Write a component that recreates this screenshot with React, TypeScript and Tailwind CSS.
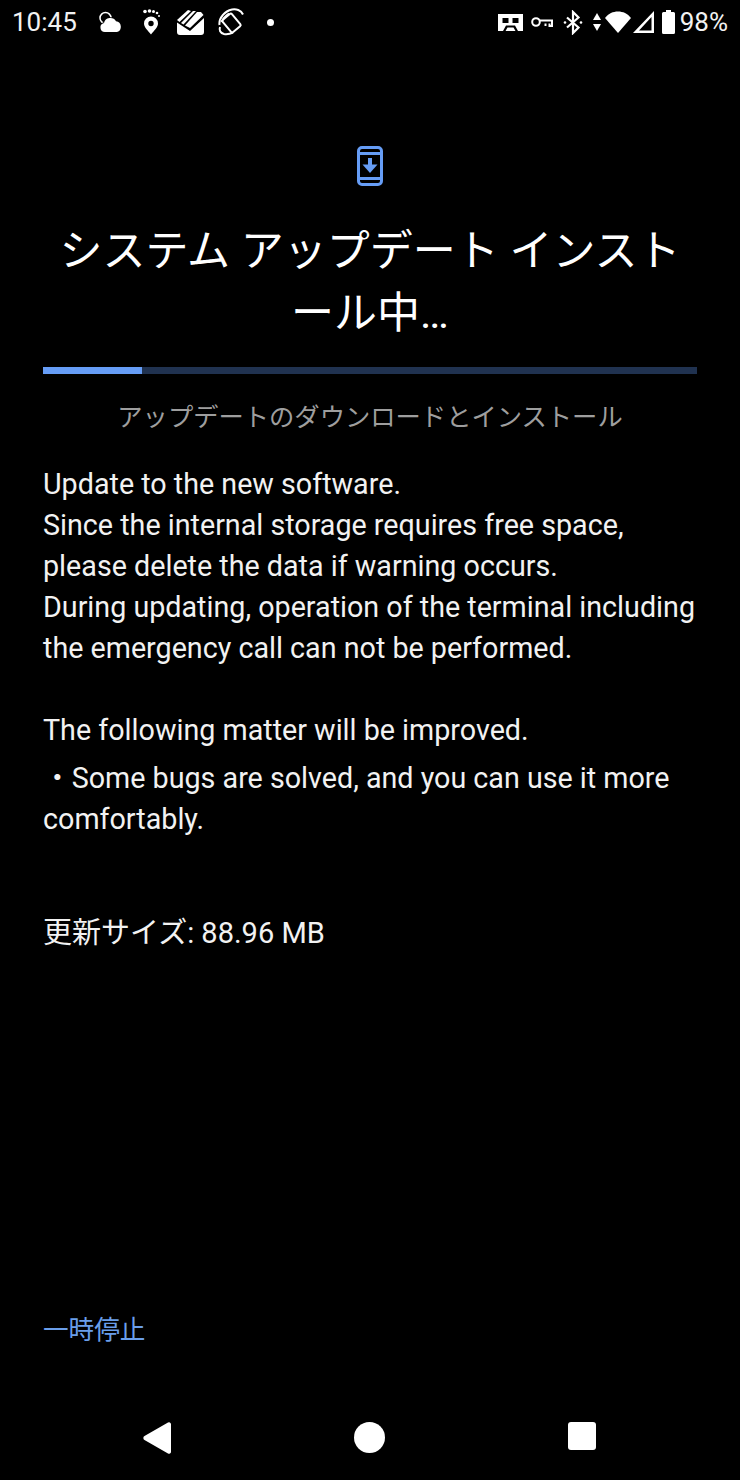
const FONT = "font-['Roboto','Noto_Sans_CJK_JP',sans-serif]"

function StatusBar() {
  return (
    <div className="h-[44px] flex items-center justify-between pl-[12px] pr-[12px] text-white">
      <div className="flex items-center">
        <span className="text-[26px] leading-none w-[87px] text-[#f2f2f2]">10:45</span>
        {/* weather */}
        <svg width="24" height="22" viewBox="0 0 24 22" className="mr-[19px]" fill="white">
          <circle cx="6.500" cy="7" r="5.500" fill="none" stroke="white" strokeWidth="1.500" />
          <path d="M6 21a4.500 4.500 0 0 1-1-8.900A6.500 6.500 0 0 1 17 10.300a5.500 5.500 0 0 1 1 10.700z" stroke="black" strokeWidth="1.500" paintOrder="stroke" />
        </svg>
        {/* steps */}
        <svg width="20" height="26" viewBox="0 0 20 26" className="mr-[15px]" fill="white">
          <circle cx="3" cy="2.500" r="1.800" />
          <circle cx="7.500" cy="2" r="1.800" />
          <circle cx="11.500" cy="2.500" r="1.500" />
          <circle cx="15" cy="4" r="1.300" />
          <circle cx="17" cy="7" r="1" />
          <path fillRule="evenodd" d="M9 7.500a7 7 0 0 1 7 7c0 4-4 7-7 11c-3-4-7-7-7-11a7 7 0 0 1 7-7zm0 4.300a2.700 2.700 0 1 0 0 5.400a2.700 2.700 0 0 0 0-5.400z" />
        </svg>
        {/* stacked mail */}
        <svg width="27" height="26" viewBox="0 0 27 26" className="mr-[13px]" fill="white">
          <path d="M0 11 L11 1 L14 2 L2.500 13z" />
          <path d="M4 14 L16 2 L19 2 L6.500 15.500z" />
          <path d="M8 16.500 L20 3 L24 3 L26.500 6 L13 19z" />
          <path d="M0 13.500 L13 22 L27 9 V23a3 3 0 0 1-3 3H3a3 3 0 0 1-3-3z" />
        </svg>
        {/* sync rotate */}
        <svg width="28" height="28" viewBox="0 0 28 28" className="mr-[22px]" fill="none" stroke="white" strokeWidth="2">
          <rect x="8.500" y="7" width="12" height="16" rx="1.500" transform="rotate(-40 14.500 15)" />
          <path d="M2.500 17C1.500 10 8 3 15 1.500c4-.8 9 .5 11 5" />
          <path d="M4.500 14C6 10.500 9 7.500 12 5.500" />
          <path d="M3 19c-1 3 0 6 4 7c3 .5 6 0 9-1.500" />
        </svg>
        <div className="w-[7px] h-[7px] rounded-full bg-white" />
      </div>
      <div className="flex items-center">
        {/* voicemail card */}
        <svg width="25" height="17" viewBox="0 0 25 17" className="mr-[8px]" fill="white">
          <path fillRule="evenodd" d="M0 0h25v17H0zM4.500 4v5h6V4zm10 0v5h6V4zM5 17L8 11.500H17L20 17H17.500L15.500 13.500H9.500L7.500 17z" />
        </svg>
        {/* vpn key */}
        <svg width="22" height="11" viewBox="0 0 22 11" className="mr-[10px]" fill="none" stroke="white" strokeWidth="2">
          <circle cx="5" cy="5" r="3.800" />
          <path d="M9 3.500H21V9H18.500V6.500M14.500 6.500V9" />
        </svg>
        {/* bluetooth */}
        <svg width="20" height="25" viewBox="0 0 20 25" className="mr-[10px]" fill="none" stroke="white" strokeWidth="2.200">
          <path d="M4 7.500L15.500 17.500L10 23V2L15.500 7.500L4 17.500" />
          <circle cx="2" cy="12.500" r="1.300" fill="white" stroke="none" />
          <circle cx="18" cy="12.500" r="1.300" fill="white" stroke="none" />
        </svg>
        {/* up/down arrows */}
        <svg width="8" height="18" viewBox="0 0 8 18" className="mr-[4px]" fill="white">
          <path d="M4 0L8 7H0z" />
          <path d="M4 18L0 11H8z" />
        </svg>
        {/* wifi */}
        <svg width="26" height="22" viewBox="0 0 26 22" className="mr-[2px]" fill="white">
          <path d="M13 22L0 7C3.500 2.500 8 .5 13 .5S22.500 2.500 26 7z" />
        </svg>
        {/* signal */}
        <svg width="21" height="22" viewBox="0 0 21 22" className="mr-[8px]" fill="white">
          <path fillRule="evenodd" d="M21 0V22H0zM18.500 6L6 19.500H18.500z" />
        </svg>
        {/* battery */}
        <svg width="13" height="24" viewBox="0 0 13 24" fill="white">
          <path d="M4 0h5v2H11.500A1.500 1.500 0 0 1 13 3.500V22.500A1.500 1.500 0 0 1 11.500 24H1.500A1.500 1.500 0 0 1 0 22.500V3.500A1.500 1.500 0 0 1 1.500 2H4z" />
        </svg>
        <span className="text-[26px] leading-none ml-[5px] text-[#f2f2f2]">98%</span>
      </div>
    </div>
  )
}

export default function App() {
  return (
    <div className={`w-[740px] h-[1480px] bg-black flex flex-col ${FONT}`}>
      <StatusBar />

      <div className="flex-1 flex flex-col px-[43px]">
        <div className="flex justify-center pt-[102px]">
          <svg width="26" height="40" viewBox="0 0 26 40" fill="none" stroke="#669df6" strokeWidth="3">
            <rect x="1.500" y="1.500" width="23" height="37" rx="3.500" />
            <path d="M1.500 7.500H24.500M1.500 32.500H24.500" />
            <path d="M13 12V21" strokeWidth="4" />
            <path d="M5.500 18.500L13 27L20.500 18.500z" fill="#669df6" stroke="none" />
          </svg>
        </div>

        <h1 className="text-[43px] leading-[62px] text-white text-center mt-[34px]">
          システム アップデート インストール中…
        </h1>

        <div className="h-[7px] bg-[#203250] mt-[23px]">
          <div className="h-full w-[99px] bg-[#669df6]" />
        </div>

        <p className="text-[25.3px] leading-[32px] text-[#9e9e9e] text-center mt-[28px]">
          アップデートのダウンロードとインストール
        </p>

        <div className="mt-[30px] text-[28.7px] leading-[41px] text-[#f2f2f2]">
          <p>Update to the new software.</p>
          <p>Since the internal storage requires free space,</p>
          <p>please delete the data if warning occurs.</p>
          <p>During updating, operation of the terminal including</p>
          <p>the emergency call can not be performed.</p>
          <p className="mt-[41px]">The following matter will be improved.</p>
          <p className="mt-[7px]">・Some bugs are solved, and you can use it more comfortably.</p>
          <p className="mt-[73px] text-[29px]">更新サイズ: 88.96 MB</p>
        </div>

        <div className="flex-1" />

        <p className="text-[25.6px] leading-[32px] text-[#6a9eea] mb-[75px]">一時停止</p>
      </div>

      <div className="h-[59px] shrink-0 flex items-start justify-between pt-[1px] pl-[143px] pr-[144px]">
        <svg width="28" height="32" viewBox="0 0 28 32" fill="white">
          <path d="M25 .500a2 2 0 0 1 3 1.500v28a2 2 0 0 1-3 1.500L1.500 18a2.300 2.300 0 0 1 0-4z" />
        </svg>
        <div className="w-[31px] h-[31px] rounded-full bg-white" />
        <div className="w-[28px] h-[28px] rounded-[3px] bg-white" />
      </div>
    </div>
  )
}
